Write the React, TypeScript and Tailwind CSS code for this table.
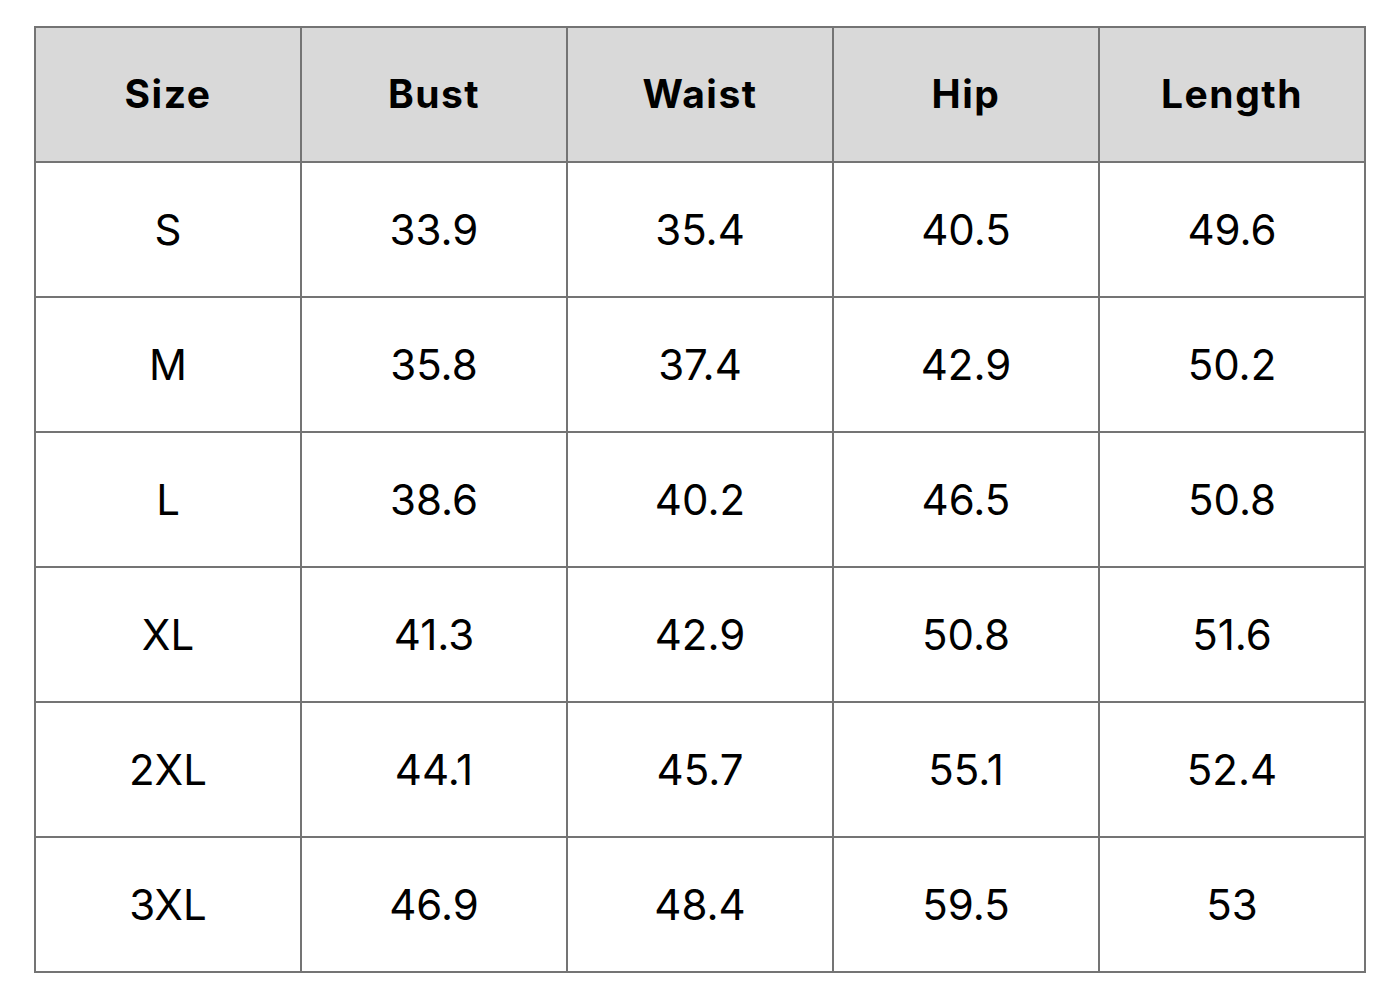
import React from "react";

const headers = ["Size", "Bust", "Waist", "Hip", "Length"];
const rows = [
  ["S", "33.9", "35.4", "40.5", "49.6"],
  ["M", "35.8", "37.4", "42.9", "50.2"],
  ["L", "38.6", "40.2", "46.5", "50.8"],
  ["XL", "41.3", "42.9", "50.8", "51.6"],
  ["2XL", "44.1", "45.7", "55.1", "52.4"],
  ["3XL", "46.9", "48.4", "59.5", "53"],
];

export default function App() {
  return (
    <div className="w-[1400px] h-[1000px] bg-white pt-[26px] pl-[34px]" style={{ fontFamily: 'Inter, "Liberation Sans", sans-serif' }}>
      <div className="grid grid-cols-[repeat(5,266px)] w-[1332px] border-l-2 border-t-2 border-[#747474]">
        {headers.map((h) => (
          <div key={h} className="h-[135px] flex items-center justify-center bg-[#d9d9d9] border-r-2 border-b-2 border-[#747474] text-[39px] font-bold tracking-[1.5px] text-black">
            {h}
          </div>
        ))}
        {rows.flatMap((r, i) =>
          r.map((c, j) => (
            <div key={i + "-" + j} className="h-[135px] flex items-center justify-center border-r-2 border-b-2 border-[#747474] text-[42px] text-black">
              {c}
            </div>
          ))
        )}
      </div>
    </div>
  );
}
